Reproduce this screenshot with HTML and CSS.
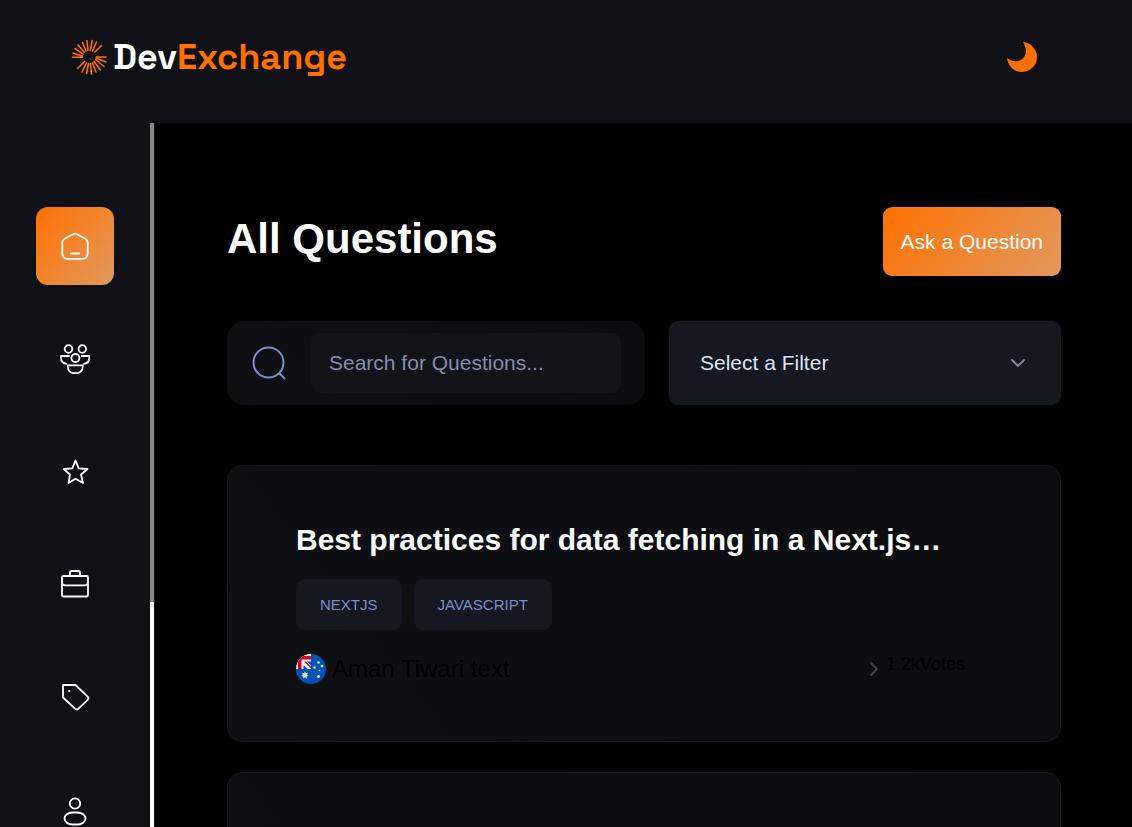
FILE: index.html
```html
<!DOCTYPE html>
<html lang="en">
<head>
<meta charset="utf-8">
<meta name="viewport" content="width=device-width, initial-scale=1">
<title>DevExchange</title>
<link rel="stylesheet" href="styles.css">
</head>
<body>
<header class="topbar">
  <a class="brand" href="#">
    <svg class="brand-mark" viewBox="0 0 36 36" aria-hidden="true">
      <g stroke="#ff7000" stroke-width="1.600" stroke-linecap="round">
        <path d="M1.500 18.200H11.500M2 14 11.500 17.200M4 9.500 12 15.200M7 6 13.300 13.200M11.500 3.500 15 12M16 1.800 17 11.500M21.200 1.500 19.300 11.500M25.500 3 21.500 12M30.500 6.500 24 13"/>
        <path d="M35 18H25.500M34.800 23 25 19M33 27.500 24.500 20.500M29.500 31 23 22.500M25 33 21.500 24M20.500 35 19.500 24.500M15.500 34.500 17.500 24.500M11 33 15.500 24M6.500 29.500 13.500 22.500"/>
      </g>
    </svg>
    <span class="brand-name">Dev<span class="brand-accent">Exchange</span></span>
  </a>
  <button class="theme" type="button" aria-label="Toggle theme">
    <svg viewBox="0 0 30 30" aria-hidden="true"><path fill="#ff7000" d="M16 0C24 1 30 7 30 15A15 15 0 0 1 15 30C7 30 1 24 0 16C3 19 8 20 12.500 18.500C19 16 21 8 16 0Z"/></svg>
  </button>
</header>
<div class="shell">
  <aside class="sidebar">
    <nav class="nav" aria-label="Main">
      <a class="nav-link nav-link-active" href="#" aria-label="Home"><svg viewBox="0 0 30 30"><path d="M13 3.200 4.500 7.700Q2.300 9 2.300 11.500V22Q2.300 27.800 7.500 27.800H22.500Q27.700 27.800 27.700 22V11.500Q27.700 9 25.500 7.700L17 3.200Q15 2 13 3.200ZM10.800 22.500H19.200"/></svg></a>
      <a class="nav-link" href="#" aria-label="Community"><svg viewBox="0 0 30 30"><circle cx="8.500" cy="5" r="3.800"/><circle cx="22.300" cy="5" r="3.800"/><circle cx="15.400" cy="14" r="4"/><path d="M9 12H1V14C1 17.500 3.500 19.300 6.500 19.800M21.800 12H29.300V14C29.300 17.500 27 19.300 24 19.800M7.800 21.300H22.800V22.500C22.800 26.500 20 29.200 16.500 29.200H14C10.500 29.200 7.800 26.500 7.800 22.500Z"/></svg></a>
      <a class="nav-link" href="#" aria-label="Collections"><svg viewBox="0 0 30 30"><path d="M15.500 3.500 18.700 11.300 27.500 12 21 17.500 23 26 15.500 21.700 8.500 26 10 17.500 3.700 12 12.300 11.300Z"/></svg></a>
      <a class="nav-link" href="#" aria-label="Find jobs"><svg viewBox="0 0 30 30"><path d="M3.500 6H26.500Q28 6 28 7.500V25Q28 26.500 26.500 26.500H3.500Q2 26.500 2 25V7.500Q2 6 3.500 6ZM10 6V2.500Q10 1 11.500 1H18.500Q20 1 20 2.500V6M2 12Q2 15.300 5 15.300H25Q28 15.300 28 12"/></svg></a>
      <a class="nav-link" href="#" aria-label="Tags"><svg viewBox="0 0 30 30"><path d="M3 2H15.500L27.700 13.700Q29.200 15.200 27.700 16.800L18.500 25.700Q16.700 27.200 15 25.700L3 14.500ZM9 8H9.500"/></svg></a>
      <a class="nav-link" href="#" aria-label="Profile"><svg viewBox="0 0 30 30"><circle cx="15" cy="7.500" r="5.200"/><rect x="4.500" y="16.500" width="21" height="12" rx="8" ry="6"/></svg></a>
    </nav>
    <div class="scroll-track"><div class="scroll-thumb"></div></div>
  </aside>
  <main class="main">
    <div class="heading-row">
      <h1 class="title">All Questions</h1>
      <button class="ask" type="button">Ask a Question</button>
    </div>
    <div class="controls">
      <label class="search">
        <svg class="search-icon" viewBox="0 0 36 36" aria-hidden="true"><circle cx="17.500" cy="17.500" r="15"/><path d="M28.500 28.500 33.500 33.500"/></svg>
        <input class="search-input" type="text" placeholder="Search for Questions..." aria-label="Search for Questions">
      </label>
      <div class="filter">
        <select class="filter-select" aria-label="Select a Filter"><option>Select a Filter</option></select>
        <svg class="filter-arrow" viewBox="0 0 24 24" aria-hidden="true"><path d="M6 9 12 15 18 9"/></svg>
      </div>
    </div>
    <section class="cards">
      <article class="card">
        <h2 class="card-title">Best practices for data fetching in a Next.js…</h2>
        <div class="tags"><a class="tag" href="#">NEXTJS</a><a class="tag" href="#">JAVASCRIPT</a></div>
        <div class="meta">
          <div class="author">
            <svg class="flag" viewBox="0 0 30 30" aria-hidden="true">
              <clipPath id="round"><circle cx="15" cy="15" r="15"/></clipPath>
              <g clip-path="url(#round)">
                <path fill="#0052b4" d="M0 0H30V30H0Z"/>
                <path fill="#f0f0f0" d="M0 0H15V15H0Z"/>
                <path fill="#d80027" d="M0 2H15V5.500H5.500V15H2V2ZM8 7.500H10L15 12.500V14.500Z"/>
                <path fill="#0052b4" d="M11 7.500H15V11.500ZM7.500 11V15H11.500Z"/>
                <path fill="#f0f0f0" d="M9 17.500 9.900 19.300 12 18.800 11 20.700 12.500 22 10.600 22.400V24.500L9 23.200 7.400 24.500V22.400L5.500 22 7 20.700 6 18.800 8.100 19.300Z"/>
                <g fill="#f0f0f0"><circle cx="22.500" cy="8.500" r="1.300"/><circle cx="18.500" cy="13.500" r="1.300"/><circle cx="26" cy="12" r="1.300"/><circle cx="22.500" cy="22.500" r="1.400"/><circle cx="23.500" cy="16.500" r="0.800"/></g>
              </g>
            </svg>
            <span>Aman Tiwari text</span>
          </div>
          <div class="votes">
            <svg class="votes-arrow" viewBox="0 0 24 24" aria-hidden="true"><path d="M9 6 15 12 9 18"/></svg>
            <span class="votes-text">1.2kVotes</span>
          </div>
        </div>
      </article>
      <article class="card"></article>
    </section>
  </main>
</div>
</body>
</html>
```
FILE: styles.css
```css
* { box-sizing: border-box; }
body {
  margin: 0;
  height: 100vh;
  display: flex;
  flex-direction: column;
  overflow: hidden;
  background: #000;
  color: #000;
  font-family: "Liberation Sans", Arial, sans-serif;
}
a { color: inherit; text-decoration: none; }
button { border: 0; cursor: pointer; font-family: inherit; }
svg { display: block; flex: none; }

.topbar {
  display: flex;
  align-items: center;
  justify-content: space-between;
  padding: 36px 95px 45px 71px;
  background: #0f1117;
}
.brand { display: flex; align-items: center; gap: 6px; }
.brand-mark { width: 36px; height: 36px; }
.brand-name {
  color: #fff;
  font-family: "Space Grotesk", Inter, sans-serif;
  font-size: 36px;
  line-height: 42px;
  font-weight: 700;
}
.brand-accent { color: #ff7000; }
.theme { padding: 0; background: none; }
.theme svg { width: 30px; height: 30px; }

.shell { flex: 1; display: flex; min-height: 0; }
.sidebar {
  display: flex;
  flex: none;
  overflow: hidden;
  background: #0f1117;
  border-right: 1px solid #151821;
}
.nav { display: flex; flex-direction: column; gap: 35px; padding: 84px 36px; }
.nav-link {
  display: grid;
  place-items: center;
  flex: none;
  width: 78px;
  height: 78px;
  border-radius: 12px;
}
.nav-link svg {
  width: 30px;
  height: 30px;
  fill: none;
  stroke: #fff;
  stroke-width: 1.8;
  stroke-linejoin: round;
  stroke-linecap: round;
}
.nav-link-active, .ask { background: linear-gradient(129deg, #ff7000 0%, #e2995f 100%); }
.scroll-track { width: 4px; background: #fff; }
.scroll-thumb { height: 68%; background: #888; }

.main { flex: 1; min-width: 0; padding: 84px 71px 0 72px; overflow: hidden; }
.heading-row { display: flex; align-items: flex-start; justify-content: space-between; }
.title { margin: 0; color: #fff; font-size: 42px; line-height: 63px; font-weight: 700; }
.ask {
  height: 69px;
  padding: 0 18px;
  border-radius: 9px;
  color: #fff;
  font-size: 21px;
}
.controls {
  display: grid;
  grid-template-columns: 418fr 392fr;
  gap: 24px;
  margin-top: 45px;
}
.search {
  min-width: 0;
  display: flex;
  align-items: center;
  gap: 24px;
  height: 84px;
  padding: 0 24px;
  border-radius: 18px;
  background: linear-gradient(232deg, rgba(23, 28, 35, 0.41) 0%, rgba(19, 22, 28, 0.7) 100%);
}
.search-icon { width: 36px; height: 36px; fill: none; stroke: #7b8ec8; stroke-width: 2; stroke-linecap: round; }
.search-input {
  flex: 1;
  min-width: 0;
  height: 60px;
  padding: 0 18px;
  border: 0;
  border-radius: 9px;
  background: #101318;
  color: #fff;
  font: 21px "Liberation Sans", Arial, sans-serif;
}
.search-input::placeholder { color: #858ead; opacity: 1; }
.filter {
  min-width: 0;
  display: grid;
  align-items: center;
  height: 84px;
}
.filter-select, .filter-arrow { grid-area: 1 / 1; }
.filter-select {
  width: 100%;
  height: 100%;
  padding: 0 31px 2px;
  border: 0;
  border-radius: 9px;
  appearance: none;
  background: #151821;
  color: #dce3f1;
  font: 21px "Liberation Sans", Arial, sans-serif;
}
.filter-arrow {
  justify-self: end;
  width: 24px;
  height: 24px;
  margin-right: 31px;
  fill: none;
  stroke: #858893;
  stroke-width: 2;
  stroke-linecap: round;
  stroke-linejoin: round;
  pointer-events: none;
}

.cards { display: flex; flex-direction: column; gap: 30px; margin-top: 60px; }
.card {
  min-height: 277px;
  padding: 54px 68px 57px;
  border: 1px solid #151821;
  border-radius: 15px;
  background: linear-gradient(232deg, rgba(23, 28, 35, 0.41) 0%, rgba(19, 22, 28, 0.7) 100%);
}
.card-title {
  margin: 0;
  overflow: hidden;
  color: #fff;
  font-size: 30px;
  line-height: 39px;
  font-weight: 700;
  white-space: nowrap;
  text-overflow: ellipsis;
}
.tags { display: flex; gap: 12px; margin-top: 20px; }
.tag {
  padding: 0 24px;
  border-radius: 9px;
  background: #151821;
  color: #7b8ec8;
  font-size: 15px;
  line-height: 51px;
}
.meta { display: flex; align-items: center; justify-content: space-between; margin-top: 24px; }
.author { display: flex; align-items: center; gap: 6px; font-size: 24px; line-height: 30px; }
.flag { width: 30px; height: 30px; }
.votes { display: flex; align-items: center; padding-right: 27px; }
.votes-arrow {
  width: 24px;
  height: 24px;
  fill: none;
  stroke: #3f4354;
  stroke-width: 2;
  stroke-linecap: round;
  stroke-linejoin: round;
}
.votes-text { padding-bottom: 9px; font-size: 18px; line-height: 21px; }
```
